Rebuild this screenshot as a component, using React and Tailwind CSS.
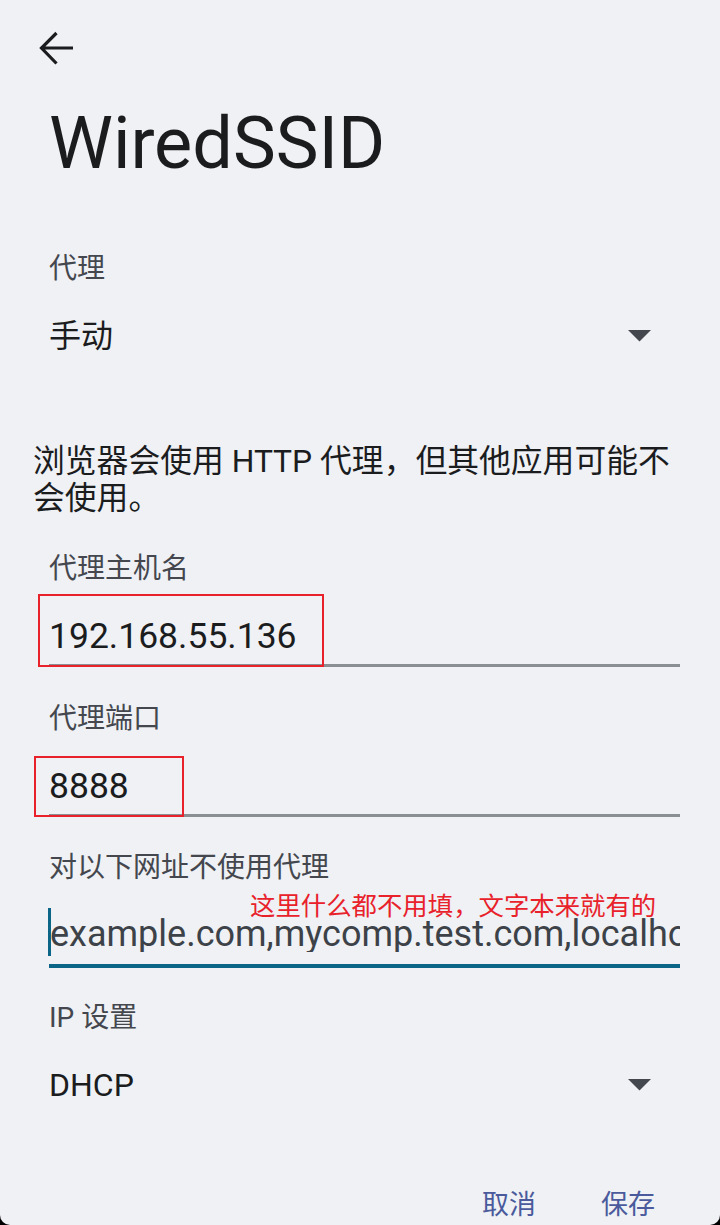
import React from 'react';

const font = { fontFamily: 'Roboto, "Noto Sans CJK SC", sans-serif' };

function Caret() {
  return (
    <svg width="23" height="12" viewBox="0 0 23 12" className="shrink-0">
      <path d="M0 0 L23 0 L11.5 11.5 Z" fill="#44474e" />
    </svg>
  );
}

function Label({ children, className = '' }) {
  return (
    <div className={`text-[28px] leading-[28px] text-[#44474e] ${className}`}>{children}</div>
  );
}

export default function App() {
  return (
    <div className="bg-black w-[720px] h-[1225px]" style={font}>
      <div className="w-[720px] h-[1225px] bg-[#eff1f4] rounded-b-[10px] overflow-hidden">
        {/* top bar */}
        <div className="pt-[28px] pl-[36px] h-[68px]">
          <svg width="40" height="40" viewBox="0 0 40 40">
            <path d="M5 20 H37 M20.5 5 L5.5 20 L20.5 35.5" fill="none" stroke="#1b1c1e" strokeWidth="3.2" />
          </svg>
        </div>

        <h1 className="mt-[40px] pl-[49px] text-[72px] leading-[72px] text-[#1b1c1e] font-normal">WiredSSID</h1>

        {/* proxy mode */}
        <div className="pl-[49px] pr-[69px]">
          <Label className="mt-[75px]">代理</Label>
          <div className="mt-[37px] flex items-center justify-between h-[32px]">
            <span className="text-[32px] leading-[32px] text-[#1b1c1e]">手动</span>
            <Caret />
          </div>
        </div>

        <p className="mt-[91px] pl-[33px] pr-[33px] text-[31.8px] leading-[37px] text-[#1b1c1e]">
          浏览器会使用 HTTP 代理，但其他应用可能不会使用。
        </p>

        <div className="pl-[49px] pr-[40px]">
          {/* host */}
          <Label className="mt-[38px]">代理主机名</Label>
          <div className="relative pt-[35px] pb-[10px] border-b-[3px] border-[#8a8f94]">
            <div className="text-[35.5px] leading-[36px] text-[#1b1c1e]">192.168.55.136</div>
            <div className="absolute left-[-11px] top-[11px] w-[286px] h-[73px] border-2 border-[#e8212b]" />
          </div>

          {/* port */}
          <Label className="mt-[38px]">代理端口</Label>
          <div className="relative pt-[35px] pb-[10px] border-b-[3px] border-[#8a8f94]">
            <div className="text-[35.5px] leading-[36px] text-[#1b1c1e]">8888</div>
            <div className="absolute left-[-15px] top-[23px] w-[150px] h-[61px] border-2 border-[#e8212b]" />
          </div>

          {/* exclusion list */}
          <Label className="mt-[37px]">对以下网址不使用代理</Label>
          <div className="relative pt-[35px] pb-[12px] border-b-4 border-[#0b6587]">
            <div className="text-[36px] leading-[35px] text-[#3c4248] whitespace-nowrap overflow-hidden pl-[1px]">
              example.com,mycomp.test.com,localhost
            </div>
            <div className="absolute left-[-1px] top-[26px] w-[3px] h-[48px] bg-[#0b6587]" />
            <div className="absolute left-[201px] top-[12px] text-[25.4px] leading-[25px] text-[#e8212b] whitespace-nowrap">
              这里什么都不用填，文字本来就有的
            </div>
          </div>
        </div>

        {/* ip settings */}
        <div className="pl-[49px] pr-[69px]">
          <Label className="mt-[36px]">IP 设置</Label>
          <div className="mt-[37px] flex items-center justify-between h-[32px]">
            <span className="text-[32px] leading-[32px] text-[#1b1c1e]">DHCP</span>
            <Caret />
          </div>
        </div>

        <div className="mt-[91px] flex justify-end gap-[65px] pr-[65px] text-[27px] leading-[27px] text-[#4a5a9c]">
          <span>取消</span>
          <span>保存</span>
        </div>
      </div>
    </div>
  );
}
